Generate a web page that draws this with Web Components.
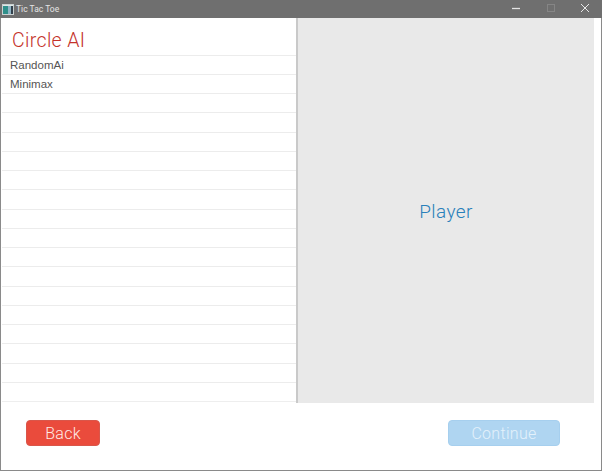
<!DOCTYPE html>
<html>
<head>
<meta charset="utf-8">
<title>Tic Tac Toe</title>
<style>
html, body { margin: 0; height: 100%; }
body { font-family: Roboto, "Liberation Sans", sans-serif; background: #fff; }
</style>
</head>
<body>
<app-window title="Tic Tac Toe">
	<ai-list heading="Circle AI" slot="left" items="RandomAi,Minimax" rows="18"></ai-list>
	<player-panel slot="right">Player</player-panel>
	<flat-button slot="back" color="#ea4b3c" edge="#d9564a">Back</flat-button>
	<flat-button slot="next" color="#afd5f1" edge="#a6cfee" text="#e3f1fb" width="112">Continue</flat-button>
</app-window>
<script>
class AppWindow extends HTMLElement {
	constructor() {
		super();
		let shadowRoot = this.attachShadow({mode: 'open'});
		shadowRoot.innerHTML = `
		<style>
		:host {
			display: flex;
			flex-direction: column;
			box-sizing: border-box;
			width: 602px;
			height: 471px;
			border: solid #8a8a8a;
			border-width: 0 1px 1px 1px;
			background: #fff;
		}
		.bar {
			display: flex;
			align-items: center;
			flex: none;
			height: 18px;
			margin: 0 -1px;
			background: #6f6f6f;
			color: #e4e4e4;
			font-size: 8.5px;
		}
		.logo { margin: 0 2px 0 2px; }
		.name { flex: 1; }
		.ctl { display: flex; width: 34px; justify-content: center; }
		.main { display: flex; flex: none; height: 385px; padding-right: 7px; }
		.left { display: block; width: 295px; flex: none; }
		.right { display: block; flex: 1; border-left: 2px solid #c9c9c9; }
		.foot {
			display: flex;
			justify-content: space-between;
			padding: 17px 41px 0 25px;
		}
		</style>
		<div class="bar">
			<svg class="logo" width="12" height="11" viewBox="0 0 12 11"><rect x=".5" y=".5" width="11" height="10" fill="#dfe7e6" stroke="#c9d0d0"/><rect x="1" y="2" width="5" height="8" fill="#2f8f8a"/><rect x="6" y="2" width="3" height="8" fill="#8fb4c4"/><rect x="9" y="2" width="2" height="8" fill="#33414d"/></svg>
			<span class="name"></span>
			<span class="ctl"><svg width="10" height="10" viewBox="0 0 10 10"><path d="M0 4.5h8" stroke="#e4e4e4" stroke-width="1.3" fill="none"/></svg></span>
			<span class="ctl"><svg width="10" height="10" viewBox="0 0 10 10"><rect x="1.5" y=".5" width="7" height="7" stroke="#858585" fill="none"/></svg></span>
			<span class="ctl"><svg width="10" height="10" viewBox="0 0 10 10"><path d="M1 0l8 8M9 0L1 8" stroke="#e8e8e8" fill="none"/></svg></span>
		</div>
		<div class="main">
			<slot class="left" name="left"></slot>
			<slot class="right" name="right"></slot>
		</div>
		<div class="foot">
			<slot name="back"></slot>
			<slot name="next"></slot>
		</div>`;
		shadowRoot.querySelector('.name').textContent = this.getAttribute('title');
	}
}
window.customElements.define('app-window', AppWindow);

class AiList extends HTMLElement {
	constructor() {
		super();
		let shadowRoot = this.attachShadow({mode: 'open'});
		shadowRoot.innerHTML = `
		<style>
		:host { display: block; height: 100%; padding-left: 1px; box-sizing: border-box; }
		h2 {
			margin: 0;
			height: 36.6px;
			padding-left: 10px;
			font-weight: 300;
			font-size: 19.5px;
			line-height: 46px;
			letter-spacing: .35px;
			color: #c4322a;
			box-sizing: border-box;
		}
		.rows { border-bottom: 1px solid #eee; }
		.row {
			box-sizing: border-box;
			height: 19.25px;
			padding-left: 8px;
			border-top: 1px solid #ececec;
			font-family: "Liberation Sans", sans-serif;
			font-size: 11.5px;
			line-height: 19px;
			color: #555;
		}
		</style>
		<h2></h2>
		<div class="rows"></div>`;
	}

	connectedCallback() {
		const root = this.shadowRoot;
		root.querySelector('h2').textContent = this.getAttribute('heading');
		const items = this.getAttribute('items').split(',');
		const rows = root.querySelector('.rows');
		for (let i = 0; i < +this.getAttribute('rows'); i++) {
			const row = document.createElement('div');
			row.className = 'row';
			row.textContent = items[i] || '';
			rows.appendChild(row);
		}
	}
}
window.customElements.define('ai-list', AiList);

class PlayerPanel extends HTMLElement {
	constructor() {
		super();
		let shadowRoot = this.attachShadow({mode: 'open'});
		shadowRoot.innerHTML = `
		<style>
		:host {
			display: flex;
			align-items: center;
			justify-content: center;
			box-sizing: border-box;
			height: 100%;
			padding-top: 2px;
			background: #e9e9e9;
			color: #2a80ba;
			font-weight: 300;
			font-size: 19px;
			letter-spacing: .4px;
		}
		</style>
		<slot></slot>`;
	}
}
window.customElements.define('player-panel', PlayerPanel);

class FlatButton extends HTMLElement {
	constructor() {
		super();
		let shadowRoot = this.attachShadow({mode: 'open'});
		shadowRoot.innerHTML = `
		<style>
		:host {
			display: flex;
			align-items: center;
			justify-content: center;
			box-sizing: border-box;
			height: 26px;
			width: 74px;
			border: 1px solid;
			border-radius: 4px;
			font-weight: 300;
			font-size: 16px;
			letter-spacing: .3px;
		}
		</style>
		<slot></slot>`;
	}

	connectedCallback() {
		this.style.background = this.getAttribute('color');
		this.style.borderColor = this.getAttribute('edge');
		this.style.color = this.getAttribute('text') || '#ffe9e6';
		if (this.hasAttribute('width')) {
			this.style.width = this.getAttribute('width') + 'px';
		}
	}
}
window.customElements.define('flat-button', FlatButton);
</script>
</body>
</html>
